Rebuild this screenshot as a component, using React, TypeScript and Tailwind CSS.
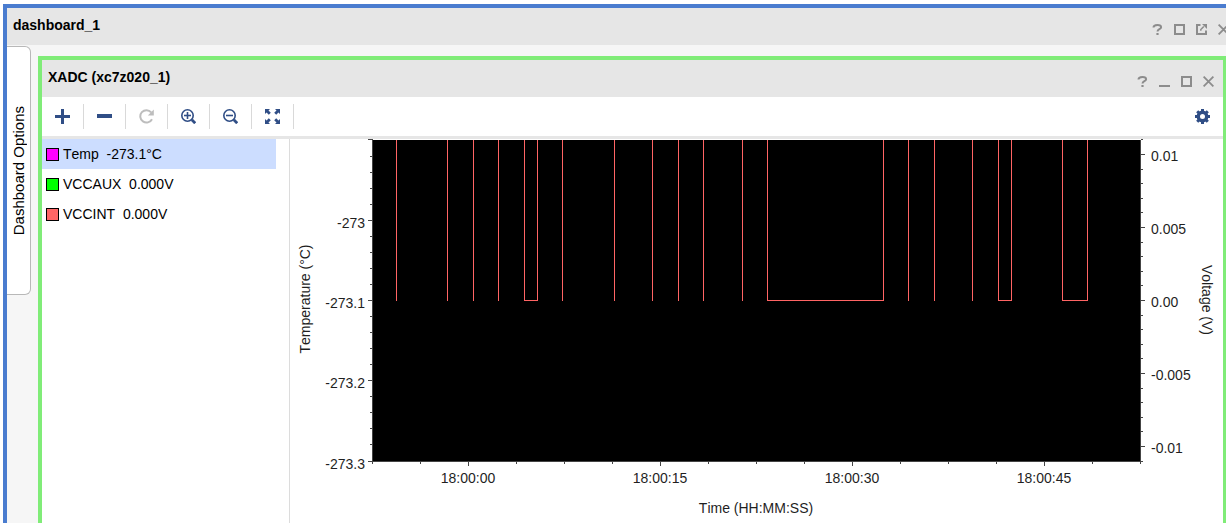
import type React from "react"

const series = [
    { name: "Temp", value: "-273.1°C", swatch: "bg-[#ff00ff]", selected: true },
    { name: "VCCAUX", value: "0.000V", swatch: "bg-[#00ff00]", selected: false },
    { name: "VCCINT", value: "0.000V", swatch: "bg-[#ff6666]", selected: false },
]

const HelpIcon: React.FC = () => (
    <svg width="11" height="11" viewBox="0 0 11 11" fill="none" stroke="#8c8c8c" strokeWidth="2">
        <path d="M1.500 3.600C1.500 1.800 3.200 1 5.400 1c2.500 0 3.700.9 3.700 2.300 0 2-3.600 1.900-3.600 4.200" />
        <path d="M4.400 10h2.200" />
    </svg>
)

const MinimizeIcon: React.FC = () => (
    <svg width="11" height="11" viewBox="0 0 11 11" fill="#8c8c8c">
        <rect x="0" y="9" width="11" height="2" />
    </svg>
)

const MaximizeIcon: React.FC = () => (
    <svg width="11" height="11" viewBox="0 0 11 11" fill="none" stroke="#8c8c8c" strokeWidth="2">
        <rect x="1" y="1" width="9" height="9" />
    </svg>
)

const FloatIcon: React.FC = () => (
    <svg width="11" height="11" viewBox="0 0 11 11" fill="none" stroke="#8c8c8c">
        <path d="M4.500 1H1v9h9V6.500" strokeWidth="2" />
        <path d="M4.800 6.800V5.500l3-3" strokeWidth="1.500" />
        <path d="M6 0h5v5z" fill="#8c8c8c" stroke="none" />
    </svg>
)

const CloseIcon: React.FC = () => (
    <svg width="11" height="11" viewBox="0 0 11 11" fill="none" stroke="#8c8c8c" strokeWidth="1.800">
        <path d="M.6.6l9.800 9.800M10.400.6L.6 10.400" />
    </svg>
)

const PlusIcon: React.FC = () => (
    <svg width="15" height="15" viewBox="0 0 15 15" fill="#304e86">
        <path d="M6 0h3v6h6v3H9v6H6V9H0V6h6z" />
    </svg>
)

const MinusIcon: React.FC = () => (
    <svg width="15" height="15" viewBox="0 0 15 15" fill="#304e86">
        <rect x="0" y="5" width="15" height="4" />
    </svg>
)

const RefreshIcon: React.FC = () => (
    <svg width="15" height="15" viewBox="0 0 15 15" fill="none">
        <path d="M13 10.200A6.200 6.200 0 1 1 12.200 3.300" stroke="#bdbdbd" strokeWidth="2" />
        <path d="M14.800.5v6H8.800z" fill="#bdbdbd" />
    </svg>
)

const ZoomIcon: React.FC<{ plus?: boolean }> = ({ plus }) => (
    <svg width="15" height="15" viewBox="0 0 15 15" fill="none" stroke="#304e86">
        <circle cx="6.500" cy="6.500" r="5.700" strokeWidth="1.600" />
        <path d="M3 6.500h7" strokeWidth="1.600" />
        {plus && <path d="M6.500 3v7" strokeWidth="1.600" />}
        <path d="M10.800 10.800l3.400 3.400" strokeWidth="2.800" />
    </svg>
)

const FitIcon: React.FC = () => (
    <svg width="15" height="15" viewBox="0 0 15 15" fill="#304e86">
        <path d="M0 0h5L3.500 1.500l2.300 2.300-2 2L1.500 3.500 0 5z" />
        <path d="M15 0v5l-1.500-1.500-2.300 2.300-2-2 2.300-2.300L10 0z" />
        <path d="M0 15v-5l1.500 1.500 2.300-2.300 2 2-2.300 2.300L5 15z" />
        <path d="M15 15h-5l1.500-1.500-2.300-2.300 2-2 2.300 2.300L15 10z" />
    </svg>
)

const GearIcon: React.FC = () => (
    <svg width="15" height="15" viewBox="0 0 15 15" fill="none" stroke="#304e86">
        <circle cx="7.500" cy="7.500" r="4.200" strokeWidth="3.400" />
        <path d="M7.500 0v3M7.500 12v3M0 7.500h3M12 7.500h3M2.200 2.200l2 2M10.800 10.800l2 2M2.200 12.800l2-2M10.800 4.200l2-2" strokeWidth="3" />
    </svg>
)

const tools = [
    { label: "Add", icon: <PlusIcon /> },
    { label: "Remove", icon: <MinusIcon /> },
    { label: "Refresh", icon: <RefreshIcon />, disabled: true },
    { label: "Zoom in", icon: <ZoomIcon plus /> },
    { label: "Zoom out", icon: <ZoomIcon /> },
    { label: "Zoom fit", icon: <FitIcon /> },
]

const TitleBar: React.FC<{ title: string; className: string; children: React.ReactNode }> = ({
    title,
    className,
    children,
}) => (
    <header className={`flex h-[37px] items-center justify-between bg-[#e6e6e6] pl-1.5 ${className}`}>
        <h2 className="pb-1 text-[14px] leading-5 font-bold text-black">{title}</h2>
        <div className="flex gap-[11px] pt-1.5">{children}</div>
    </header>
)

const WindowButton: React.FC<{ label: string; children: React.ReactNode }> = ({ label, children }) => (
    <button type="button" aria-label={label} className="block size-[11px]">
        {children}
    </button>
)

// chart geometry, in viewBox units
const plot = { left: 82, right: 850, top: 1, bottom: 322, zero: 161 }

const leftLabels = [
    { text: "-273", y: 81 },
    { text: "-273.1", y: 161 },
    { text: "-273.2", y: 241 },
    { text: "-273.3", y: 322 },
]

const rightLabels = [
    { text: "0.01", step: 10 },
    { text: "0.005", step: 5 },
    { text: "0.00", step: 0 },
    { text: "-0.005", step: -5 },
    { text: "-0.01", step: -10 },
]

const timeLabels = ["18:00:00", "18:00:15", "18:00:30", "18:00:45"]

const spikes = [106, 157, 183, 208, 272, 324, 362, 388, 413, 452, 618, 644, 682]
const lows = [
    [234, 247],
    [477, 593],
    [708, 721],
    [772, 797],
]

const leftTicks = Array.from({ length: 21 }, (_, i) => ({
    y: i === 0 ? 0 : i === 20 ? 322 : 1 + i * 16,
    long: i % 5 === 0,
}))
const rightTicks = Array.from({ length: 23 }, (_, i) => {
    const step = 11 - i
    return { y: Math.round(plot.zero - step * 14.6), long: step % 5 === 0 }
})
const bottomTicks = Array.from({ length: 17 }, (_, i) => ({ x: plot.left + i * 48, long: i % 4 === 2 }))

const XadcChart: React.FC = () => (
    <svg
        viewBox="0 0 933 384"
        role="img"
        aria-label="XADC temperature and voltage over time"
        className="block h-auto w-full text-[14px]"
        fill="#1f1f1f"
    >
        <g shapeRendering="crispEdges">
            <rect x={plot.left} y={plot.top} width={plot.right - plot.left + 1} height={plot.bottom - plot.top} fill="#000" />
            <g fill="#444">
                <rect x={plot.left} y="0" width="1" height="323" />
                <rect x={plot.right} y={plot.top} width="1" height="322" />
                <rect x={plot.left} y={plot.bottom} width="769" height="1" />
                {leftTicks.map((t) => (
                    <rect key={t.y} x={t.long ? 78 : 80} y={t.y} width={t.long ? 4 : 2} height="1" />
                ))}
                {rightTicks.map((t) => (
                    <rect key={t.y} x="851" y={t.y} width={t.long ? 4 : 2} height="1" />
                ))}
                {bottomTicks.map((t) => (
                    <rect key={t.x} x={t.x} y="323" width="1" height={t.long ? 4 : 2} />
                ))}
            </g>
            <g fill="#ff6464">
                {[...spikes, ...lows.flat()].map((x) => (
                    <rect key={x} x={x} y={plot.top} width="1" height="161" />
                ))}
                {lows.map(([from, to]) => (
                    <rect key={from} x={from} y={plot.zero} width={to - from + 1} height="1" />
                ))}
            </g>
        </g>

        {leftLabels.map((l) => (
            <text key={l.text} x="75" y={l.y + 8} textAnchor="end">
                {l.text}
            </text>
        ))}
        {rightLabels.map((l) => (
            <text key={l.text} x="861" y={Math.round(plot.zero - l.step * 14.6) + 7}>
                {l.text}
            </text>
        ))}
        {timeLabels.map((label, i) => (
            <text key={label} x={178 + i * 192} y="344" textAnchor="middle">
                {label}
            </text>
        ))}
        <text x="466" y="374" textAnchor="middle">
            Time (HH:MM:SS)
        </text>
        <text transform="translate(20 160) rotate(-90)" textAnchor="middle">
            Temperature (°C)
        </text>
        <text transform="translate(912 161) rotate(90)" textAnchor="middle">
            Voltage (V)
        </text>
    </svg>
)

const App: React.FC = () => {
    return (
        <div className="h-screen overflow-hidden bg-white font-['Liberation_Sans',Arial,sans-serif] text-black [font-kerning:none]">
            <div className="mt-1 -mr-2 ml-[3px] flex min-h-screen flex-col border-4 border-[#4a7ccf] bg-[#f6f6f6]">
                <TitleBar title="dashboard_1" className="pr-px">
                    <WindowButton label="Help"><HelpIcon /></WindowButton>
                    <WindowButton label="Maximize"><MaximizeIcon /></WindowButton>
                    <WindowButton label="Float"><FloatIcon /></WindowButton>
                    <WindowButton label="Close"><CloseIcon /></WindowButton>
                </TitleBar>

                <div className="flex grow items-start pr-[3px]">
                    <button
                        type="button"
                        className="mt-px flex w-6 shrink-0 items-center justify-center rounded-r-md border border-l-0 border-[#b8b8b8] bg-white py-[59px]"
                    >
                        <span className="rotate-180 text-[15px] leading-5 whitespace-nowrap [writing-mode:vertical-rl]">
                            Dashboard Options
                        </span>
                    </button>

                    <section className="mt-[11px] ml-[7px] flex min-w-0 grow flex-col self-stretch border-4 border-[#80ec78] bg-white">
                        <TitleBar title="XADC (xc7z020_1)" className="pr-[9px]">
                            <WindowButton label="Help"><HelpIcon /></WindowButton>
                            <WindowButton label="Minimize"><MinimizeIcon /></WindowButton>
                            <WindowButton label="Maximize"><MaximizeIcon /></WindowButton>
                            <WindowButton label="Close"><CloseIcon /></WindowButton>
                        </TitleBar>

                        <div className="flex items-center justify-between border-b-3 border-[#e6e6e6] py-[7px] pr-[13px]">
                            <div className="flex">
                                {tools.map((tool) => (
                                    <button
                                        key={tool.label}
                                        type="button"
                                        aria-label={tool.label}
                                        disabled={tool.disabled}
                                        className="flex h-[25px] w-[42px] items-center justify-center border-r border-[#d9d9d9]"
                                    >
                                        {tool.icon}
                                    </button>
                                ))}
                            </div>
                            <button type="button" aria-label="Settings">
                                <GearIcon />
                            </button>
                        </div>

                        <div className="flex grow">
                            <ul className="w-[248px] shrink-0 border-r border-[#dcdcdc] pr-[13px]">
                                {series.map((item) => (
                                    <li
                                        key={item.name}
                                        className={`flex h-[30px] items-center gap-1 pl-1 text-[14px] ${item.selected ? "bg-[#ccddff]" : ""}`}
                                    >
                                        <span className={`size-[13px] border border-black ${item.swatch}`} />
                                        <span className="whitespace-pre">{`${item.name}  ${item.value}`}</span>
                                    </li>
                                ))}
                            </ul>
                            <div className="min-w-0 grow">
                                <XadcChart />
                            </div>
                        </div>
                    </section>
                </div>
            </div>
        </div>
    )
}

export default App
